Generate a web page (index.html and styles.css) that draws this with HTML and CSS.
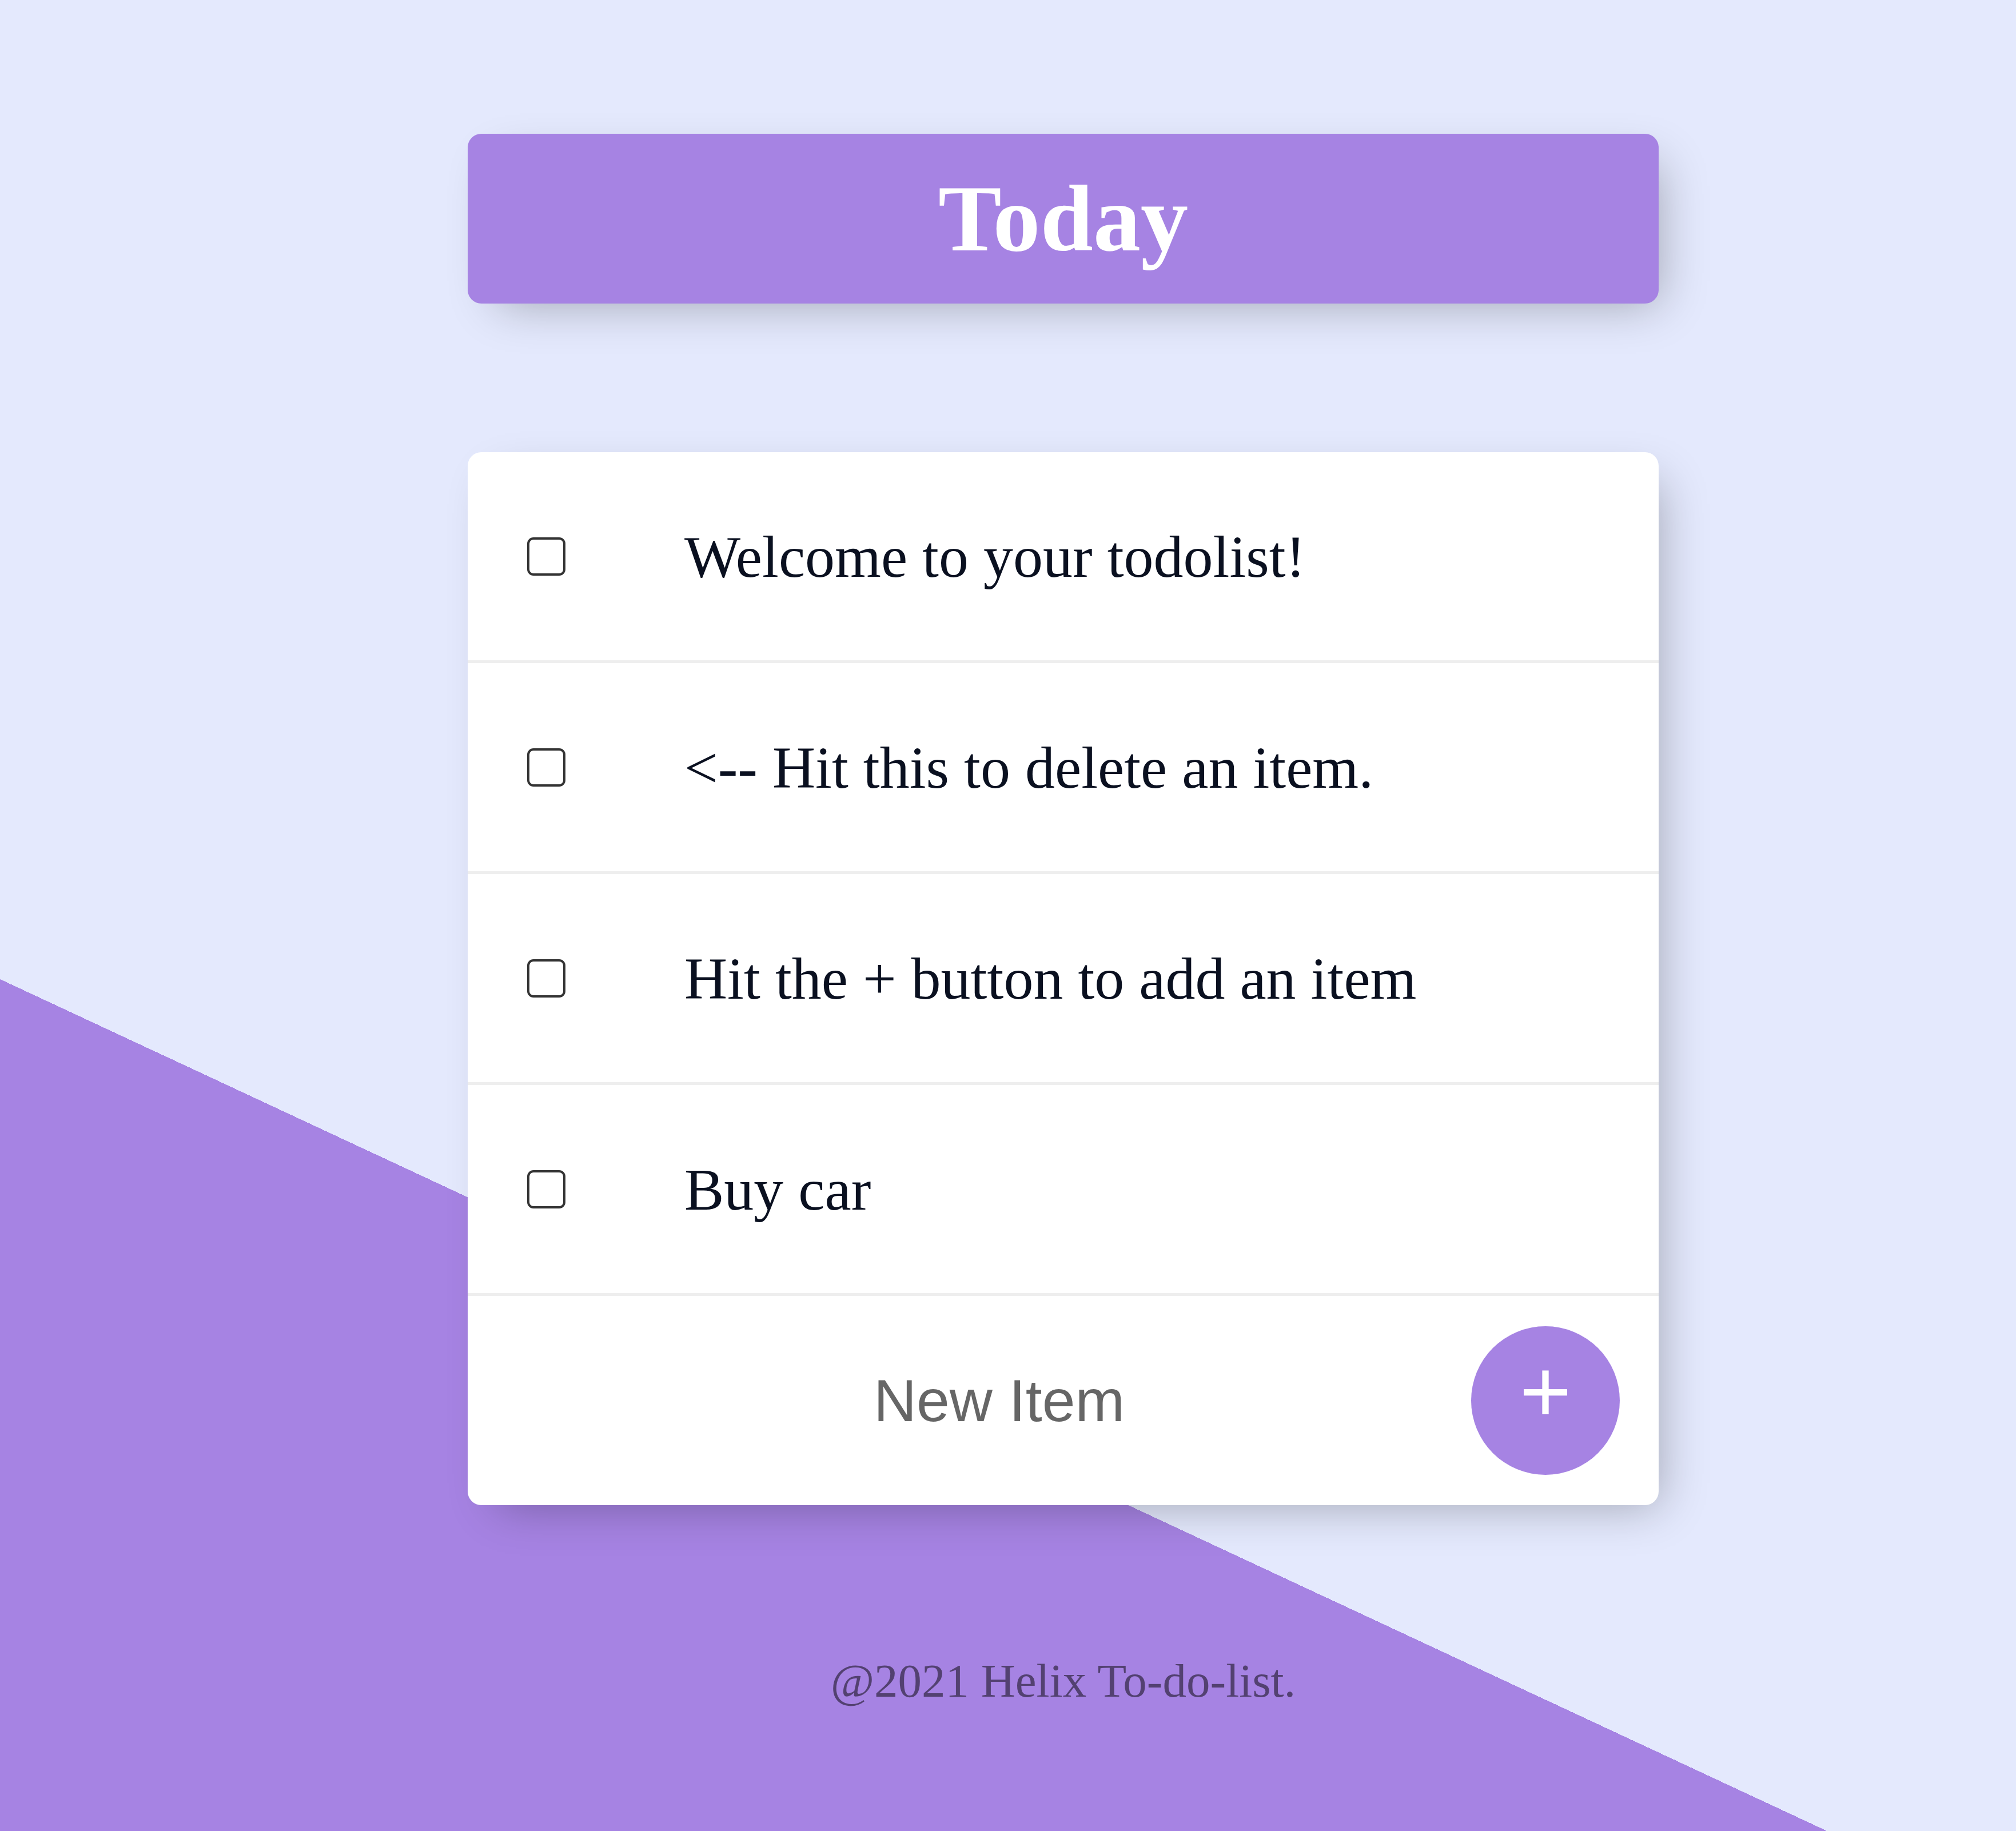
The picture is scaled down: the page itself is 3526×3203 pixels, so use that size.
FILE: index.html
```html
<!DOCTYPE html>
<html lang="en">
<head>
<meta charset="utf-8">
<title>Today - To-do list</title>
<link rel="stylesheet" href="styles.css">
</head>
<body>
<div class="page">
  <div class="box heading">
    <h1>Today</h1>
  </div>
  <div class="box list">
    <div class="item">
      <input class="check" type="checkbox">
      <p>Welcome to your todolist!</p>
    </div>
    <div class="item">
      <input class="check" type="checkbox">
      <p>&lt;-- Hit this to delete an item.</p>
    </div>
    <div class="item">
      <input class="check" type="checkbox">
      <p>Hit the + button to add an item</p>
    </div>
    <div class="item">
      <input class="check" type="checkbox">
      <p>Buy car</p>
    </div>
    <form class="item new-item">
      <input class="new-text" type="text" name="newItem" placeholder="New Item" autocomplete="off">
      <button class="add" type="button">+</button>
    </form>
  </div>
  <footer class="footer">@2021 Helix To-do-list.</footer>
</div>
</body>
</html>
```

FILE: styles.css
```css
html {
  background: #E4E9FD linear-gradient(25deg, #A683E3 50%, #E4E9FD 50%) 0 0 / 3526px 5070px no-repeat;
  min-height: 100%;
  font-family: "Liberation Serif", "Times New Roman", serif;
}

body {
  margin: 0;
}

.page {
  width: 2083px;
  margin-left: 818px;
  padding-top: 234px;
}

.box {
  background: #fff;
  border-radius: 24px;
  box-shadow: 26px 26px 78px -26px rgba(0, 0, 0, 0.3);
}

.heading {
  background: #A683E3;
  text-align: center;
}

.heading h1 {
  margin: 0;
  padding: 53px;
  font-size: 166px;
  line-height: 191px;
  font-weight: bold;
  color: #fff;
}

.list {
  margin-top: 260px;
}

.item {
  min-height: 364px;
  display: flex;
  align-items: center;
  border-bottom: 5px solid #EEEEEE;
}

.item:last-child {
  border-bottom: 0;
  min-height: 366px;
}

.check {
  appearance: none;
  -webkit-appearance: none;
  flex: none;
  box-sizing: border-box;
  width: 67px;
  height: 67px;
  margin: 0 104px;
  border: 4px solid #333;
  border-radius: 11px;
  background: #fff;
}

.item p {
  margin: 0;
  padding: 104px;
  font-size: 104px;
  color: #0a1020;
}

.new-item {
  margin: 0 0 0 104px;
}

.new-text {
  box-sizing: content-box;
  width: 1631px;
  height: 313px;
  padding: 0 10px;
  border: none;
  background: transparent;
  font-family: "Liberation Sans", Arial, sans-serif;
  font-size: 104px;
  text-align: center;
  color: #000;
  outline: none;
}

.new-text::placeholder {
  color: #666;
  opacity: 1;
}

.add {
  flex: none;
  box-sizing: border-box;
  width: 260px;
  height: 260px;
  padding: 0 0 31px;
  border: 0;
  border-radius: 50%;
  background: #A683E3;
  color: #fff;
  font-family: "Liberation Sans", Arial, sans-serif;
  font-size: 156px;
  line-height: 1.15;
}

.footer {
  margin-top: 260px;
  text-align: center;
  font-size: 83px;
  line-height: 95px;
  color: rgba(0, 0, 0, 0.5);
}
```
